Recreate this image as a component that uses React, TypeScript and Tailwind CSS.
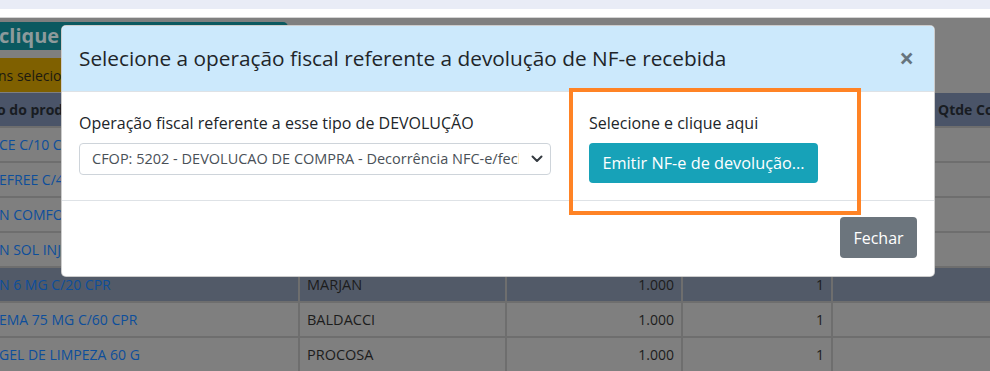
import React from "react";

const rows = [
  { name: "CE C/10 CPR REV", brand: "EMS", qty: "1.000", n: "1" },
  { name: "EFREE C/4 CPR", brand: "NEO QUIMICA", qty: "1.000", n: "1" },
  { name: "N COMFORT 120 ML", brand: "CIMED", qty: "1.000", n: "1" },
  { name: "N SOL INJ 2 ML", brand: "HYPERA", qty: "1.000", n: "1" },
  { name: "N 6 MG C/20 CPR", brand: "MARJAN", qty: "1.000", n: "1", active: true },
  { name: "EMA 75 MG C/60 CPR", brand: "BALDACCI", qty: "1.000", n: "1" },
  { name: "GEL DE LIMPEZA 60 G", brand: "PROCOSA", qty: "1.000", n: "1" },
];

const font = { fontFamily: '"Open Sans", "Noto Sans", Arial, sans-serif' };

const Chevron = () => (
  <svg width="12" height="8" viewBox="0 0 12 8" fill="none">
    <path d="M1.5 1.5 6 6l4.5-4.5" stroke="#343a40" strokeWidth="2" strokeLinecap="round" strokeLinejoin="round" />
  </svg>
);

export default function App() {
  return (
    <div className="w-[990px] h-[371px] overflow-hidden bg-white" style={font}>
      <div className="h-[9px] bg-[#e9ecf6]" />
      <div className="h-[8px] bg-white" />

      {/* dimmed page behind the modal */}
      <div className="relative h-[354px] bg-[#7f7f7f] border-t border-[#d4d4d4]">
        <div className="mt-[4px] w-[288px] h-[28px] bg-[#0b5960] rounded-tr-[5px] flex items-center overflow-hidden">
          <span className="-ml-[1px] text-[20px] font-bold text-[#8d9a9b] whitespace-nowrap">clique em um item</span>
        </div>
        <div className="mt-[8px] w-[288px] h-[34px] bg-[#7f6000] flex items-center overflow-hidden">
          <span className="-ml-[2px] text-[14px] text-[#1c1a10] whitespace-nowrap">ns selecionados</span>
        </div>

        <div className="mt-[1px] grid grid-cols-[298px_205px_174px_148px_1fr] gap-[2px] bg-[#6e6e6e] text-[14px]">
          <div className="h-[33px] bg-[#4a5468] flex items-center font-bold text-[#181c22] whitespace-nowrap overflow-hidden">
            <span className="-ml-[3px]">o do produto</span>
          </div>
          <div className="bg-[#4a5468]" />
          <div className="bg-[#4a5468]" />
          <div className="bg-[#4a5468]" />
          <div className="bg-[#4a5468] flex items-center font-bold text-[#181c22] whitespace-nowrap overflow-hidden pl-[105px]">
            Qtde Conferida
          </div>
          {rows.map((r) => {
            const bg = r.active ? "bg-[#525a68]" : "bg-[#7f7f7f]";
            return (
              <React.Fragment key={r.name}>
                <div className={`h-[33px] ${bg} flex items-center whitespace-nowrap overflow-hidden text-[#0d4e9b]`}>
                  <span className="-ml-[1px]">{r.name}</span>
                </div>
                <div className={`${bg} flex items-center px-[7px] text-[#1c1c1c] text-[14.5px]`}>{r.brand}</div>
                <div className={`${bg} flex items-center justify-end px-[7px] text-[#1c1c1c]`}>{r.qty}</div>
                <div className={`${bg} flex items-center justify-end px-[7px] text-[#1c1c1c]`}>{r.n}</div>
                <div className={bg} />
              </React.Fragment>
            );
          })}
        </div>

        {/* modal */}
        <div className="absolute left-[61px] top-[7px] w-[874px] h-[252px] bg-white rounded-[5px] border border-black/20 overflow-hidden flex flex-col">
          <div className="h-[66px] bg-[#cce9fc] border-b border-[#dee2e6] flex items-center justify-between pl-[17px] pr-[20px]">
            <h5 className="text-[20.8px] text-[#212529] whitespace-nowrap">Selecione a operação fiscal referente a devolução de NF-e recebida</h5>
            <span className="text-[26px] font-bold leading-none text-black/50 -mt-[2px]">×</span>
          </div>
          <div className="h-[109px] flex border-b border-[#dee2e6] pt-[19px] pl-[17px]">
            <div className="w-[472px]">
              <div className="text-[16px] text-[#212529] leading-[24px]">Operação fiscal referente a esse tipo de DEVOLUÇÃO</div>
              <div className="mt-[8px] h-[32px] border border-[#ced4da] rounded-[4px] flex items-center justify-between pl-[12px] pr-[7px]">
                <span className="text-[14.5px] text-[#495057] whitespace-nowrap overflow-hidden w-[427px]">
                  CFOP: 5202 - DEVOLUCAO DE COMPRA - Decorrência NFC-e/fechamento
                </span>
                <Chevron />
              </div>
            </div>
            <div className="ml-[38px]">
              <div className="text-[16px] text-[#212529] leading-[24px]">Selecione e clique aqui</div>
              <button className="mt-[8px] h-[40px] w-[229px] bg-[#17a2b8] rounded-[4px] text-white text-[16.3px] whitespace-nowrap">
                Emitir NF-e de devolução...
              </button>
            </div>
          </div>
          <div className="flex-1 flex justify-end items-start pt-[16px] pr-[17px]">
            <button className="h-[41px] w-[77px] bg-[#6c757d] rounded-[4px] text-white text-[16px]">Fechar</button>
          </div>
        </div>

        {/* orange highlight annotation */}
        <div className="absolute left-[569px] top-[70px] w-[292px] h-[127px] border-[4px] border-[#ff8325]" />
      </div>
    </div>
  );
}
